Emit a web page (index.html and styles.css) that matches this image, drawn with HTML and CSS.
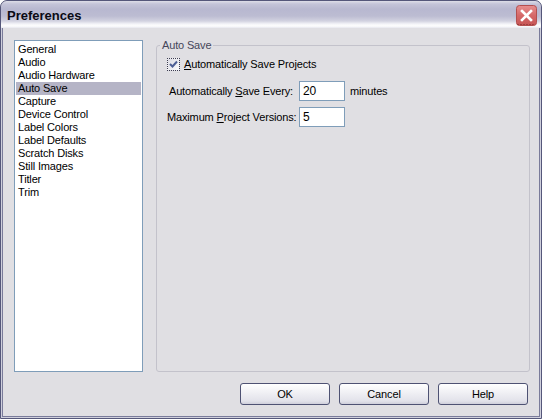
FILE: index.html
```html
<!DOCTYPE html>
<html>
<head>
<meta charset="utf-8">
<link rel="stylesheet" href="styles.css">
</head>
<body>
<div class="window">
  <div class="titlebar">
    <span class="title">Preferences</span>
    <span class="close">
      <svg width="21" height="21" viewBox="0 0 21 21">
        <defs>
          <linearGradient id="cg" x1="0" y1="0" x2="0" y2="1">
            <stop offset="0" stop-color="#e78f8f"/>
            <stop offset="0.5" stop-color="#d56868"/>
            <stop offset="1" stop-color="#c65555"/>
          </linearGradient>
        </defs>
        <rect x="0.5" y="0.5" width="20" height="20" rx="3" fill="url(#cg)" stroke="#b34f4f"/>
        <line x1="1.5" y1="19.5" x2="19.5" y2="19.5" stroke="#7a2a2a" stroke-dasharray="1 2"/>
        <path d="M6 6 L15 15 M15 6 L6 15" stroke="#fff" stroke-width="2.6" stroke-linecap="square"/>
      </svg>
    </span>
  </div>
  <div class="body">
    <div class="main">
      <ul class="list">
        <li>General</li>
        <li>Audio</li>
        <li>Audio Hardware</li>
        <li class="selected">Auto Save</li>
        <li>Capture</li>
        <li>Device Control</li>
        <li>Label Colors</li>
        <li>Label Defaults</li>
        <li>Scratch Disks</li>
        <li>Still Images</li>
        <li>Titler</li>
        <li>Trim</li>
      </ul>
      <fieldset class="group">
        <legend class="legend">Auto Save</legend>
        <div class="inner">
          <div class="check-row">
            <span class="checkbox">
              <svg width="11" height="11" viewBox="0 0 11 11">
                <path d="M2 5 L4.5 7.5 L9 2.5" fill="none" stroke="#4d5f95" stroke-width="2"/>
              </svg>
            </span>
            <span class="check-label"><u>A</u>utomatically Save Projects</span>
          </div>
          <div class="fields">
            <span class="flabel">Automatically <u>S</u>ave Every:</span>
            <span class="input">20</span>
            <span class="unit">minutes</span>
            <span class="flabel">Maximum <u>P</u>roject Versions:</span>
            <span class="input">5</span>
            <span></span>
          </div>
        </div>
      </fieldset>
    </div>
    <div class="buttons">
      <button class="btn">OK</button>
      <button class="btn">Cancel</button>
      <button class="btn">Help</button>
    </div>
  </div>
</div>
</body>
</html>
```
FILE: styles.css
```css
html, body {
  margin: 0;
  padding: 0;
  background: #ffffff;
}

body {
  font-family: "Liberation Sans", Arial, sans-serif;
  font-size: 11px;
  color: #000;
}

.window {
  width: 542px;
  height: 419px;
  box-sizing: border-box;
  border: 1px solid #55577a;
  border-radius: 7px 7px 0 0;
  background: #e0dfe3;
  box-shadow: inset 0 0 0 1px #cfcfdc, inset 0 0 0 2px #7a7b9a;
  display: flex;
  flex-direction: column;
  overflow: hidden;
}

.titlebar {
  height: 27px;
  flex: none;
  box-sizing: border-box;
  display: flex;
  align-items: flex-start;
  justify-content: space-between;
  background: linear-gradient(#dedee8 0px, #c4c4d8 3px, #b8b8d0 8px, #bcbcd2 15px, #d2d2e0 20px, #f4f4f8 23px, #fdfdfd 25px, #e6e6ee 27px);
  border-radius: 6px 6px 0 0;
}

.title {
  font-weight: bold;
  font-size: 13px;
  line-height: 16px;
  padding: 7px 0 0 6px;
  color: #0a0a14;
}

.close {
  display: block;
  width: 21px;
  height: 21px;
  margin: 4px 4px 0 0;
}

.close svg {
  display: block;
}

.body {
  flex: 1;
  display: flex;
  flex-direction: column;
  padding: 12px 11px 12px 13px;
  letter-spacing: -0.15px;
}

.main {
  display: flex;
  gap: 13px;
  height: 332px;
}

.list {
  width: 129px;
  box-sizing: border-box;
  margin: 0;
  padding: 2px 1px;
  list-style: none;
  background: #fff;
  border: 1px solid #7f9db9;
}

.list li {
  height: 13px;
  line-height: 13px;
  padding-left: 2px;
  white-space: nowrap;
}

.list li.selected {
  background: #b5b4c6;
}

.group {
  flex: 1;
  min-width: 0;
  margin: 0;
  padding: 7px 0 0 0;
  border: 1px solid #c3c2cb;
  border-radius: 3px;
}

.legend {
  margin-left: 3px;
  padding: 0 2px;
  line-height: 11px;
  color: #45465a;
}

.inner {
  padding-left: 10px;
}

.check-row {
  display: flex;
  align-items: center;
  height: 13px;
}

.checkbox {
  width: 13px;
  height: 13px;
  box-sizing: border-box;
  border: 1px dotted #3c3c50;
  background: linear-gradient(135deg, #dcdce4, #fbfbfc);
  margin-right: 4px;
  display: flex;
  align-items: center;
  justify-content: center;
}

.checkbox svg {
  display: block;
}

.check-label {
  line-height: 13px;
}

.fields {
  display: grid;
  grid-template-columns: 126px 46px auto;
  grid-auto-rows: 20px;
  column-gap: 6px;
  row-gap: 6px;
  margin-top: 10px;
  align-items: center;
}

.flabel {
  text-align: right;
  white-space: nowrap;
}

.input {
  height: 20px;
  box-sizing: border-box;
  border: 1px solid #7f9db9;
  background: #fff;
  padding-left: 3px;
  line-height: 18px;
  font-size: 12px;
}

.unit {
  margin-left: -1px;
}

.buttons {
  display: flex;
  justify-content: flex-end;
  gap: 9px;
  margin-top: 11px;
  padding-right: 2px;
}

.btn {
  width: 90px;
  height: 22px;
  box-sizing: border-box;
  border: 1px solid #4e5273;
  border-radius: 3px;
  background: linear-gradient(#ffffff 0%, #f1f1f5 40%, #e2e2ea 85%, #cfcfdb 100%);
  font-family: "Liberation Sans", Arial, sans-serif;
  font-size: 11px;
  color: #000;
  padding: 0;
  letter-spacing: -0.15px;
}
```
